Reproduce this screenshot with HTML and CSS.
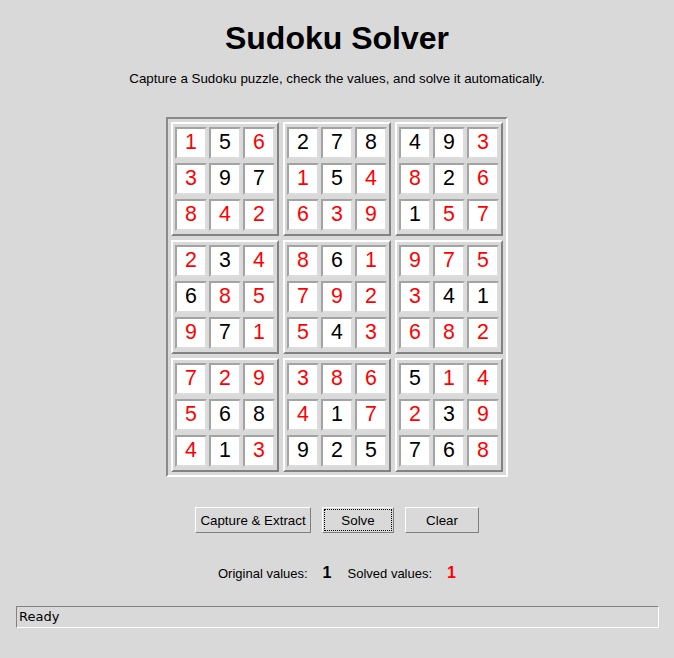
FILE: index.html
```html
<!DOCTYPE html>
<html>
<head>
<meta charset="utf-8">
<title>Sudoku Solver</title>
<link rel="stylesheet" href="styles.css">
</head>
<body>
<div class="app">
  <h1 class="title">Sudoku Solver</h1>
  <p class="subtitle">Capture a Sudoku puzzle, check the values, and solve it automatically.</p>
  <div class="board">
    <div class="block">
      <div class="cell solved">1</div><div class="cell">5</div><div class="cell solved">6</div>
      <div class="cell solved">3</div><div class="cell">9</div><div class="cell">7</div>
      <div class="cell solved">8</div><div class="cell solved">4</div><div class="cell solved">2</div>
    </div>
    <div class="block">
      <div class="cell">2</div><div class="cell">7</div><div class="cell">8</div>
      <div class="cell solved">1</div><div class="cell">5</div><div class="cell solved">4</div>
      <div class="cell solved">6</div><div class="cell solved">3</div><div class="cell solved">9</div>
    </div>
    <div class="block">
      <div class="cell">4</div><div class="cell">9</div><div class="cell solved">3</div>
      <div class="cell solved">8</div><div class="cell">2</div><div class="cell solved">6</div>
      <div class="cell">1</div><div class="cell solved">5</div><div class="cell solved">7</div>
    </div>
    <div class="block">
      <div class="cell solved">2</div><div class="cell">3</div><div class="cell solved">4</div>
      <div class="cell">6</div><div class="cell solved">8</div><div class="cell solved">5</div>
      <div class="cell solved">9</div><div class="cell">7</div><div class="cell solved">1</div>
    </div>
    <div class="block">
      <div class="cell solved">8</div><div class="cell">6</div><div class="cell solved">1</div>
      <div class="cell solved">7</div><div class="cell solved">9</div><div class="cell solved">2</div>
      <div class="cell solved">5</div><div class="cell">4</div><div class="cell solved">3</div>
    </div>
    <div class="block">
      <div class="cell solved">9</div><div class="cell solved">7</div><div class="cell solved">5</div>
      <div class="cell solved">3</div><div class="cell">4</div><div class="cell">1</div>
      <div class="cell solved">6</div><div class="cell solved">8</div><div class="cell solved">2</div>
    </div>
    <div class="block">
      <div class="cell solved">7</div><div class="cell solved">2</div><div class="cell solved">9</div>
      <div class="cell solved">5</div><div class="cell">6</div><div class="cell">8</div>
      <div class="cell solved">4</div><div class="cell">1</div><div class="cell solved">3</div>
    </div>
    <div class="block">
      <div class="cell solved">3</div><div class="cell solved">8</div><div class="cell solved">6</div>
      <div class="cell solved">4</div><div class="cell">1</div><div class="cell solved">7</div>
      <div class="cell">9</div><div class="cell">2</div><div class="cell">5</div>
    </div>
    <div class="block">
      <div class="cell">5</div><div class="cell solved">1</div><div class="cell solved">4</div>
      <div class="cell solved">2</div><div class="cell">3</div><div class="cell solved">9</div>
      <div class="cell">7</div><div class="cell">6</div><div class="cell solved">8</div>
    </div>
  </div>
  <div class="actions">
    <button class="btn btn-capture">Capture &amp; Extract</button>
    <button class="btn btn-solve">Solve</button>
    <button class="btn btn-clear">Clear</button>
  </div>
  <div class="stats">
    <span class="label">Original values:</span>
    <span class="value">1</span>
    <span class="label label-solved">Solved values:</span>
    <span class="value value-solved">1</span>
  </div>
  <div class="status">Ready</div>
</div>
</body>
</html>
```
FILE: styles.css
```css
html, body {
  margin: 0;
  padding: 0;
  background: #d9d9d9;
}

body {
  font-family: "Liberation Sans", Arial, sans-serif;
  color: #000;
}

.app {
  padding-top: 20px;
}

.title {
  margin: 0;
  font-size: 32px;
  font-weight: bold;
  line-height: 37px;
  text-align: center;
}

.subtitle {
  margin: 14px 0 0;
  font-size: 13.33px;
  line-height: 16px;
  text-align: center;
}

.board {
  margin: 30px auto 0;
  width: fit-content;
  display: grid;
  grid-template-columns: repeat(3, auto);
  padding: 1px;
  border: 2px solid;
  border-color: #8a8a8a #ffffff #ffffff #8a8a8a;
}

.block {
  margin: 2px;
  padding: 1px;
  display: grid;
  grid-template-columns: repeat(3, auto);
  border: 2px solid;
  border-color: #ffffff #828282 #828282 #ffffff;
}

.cell {
  width: 32px;
  height: 32px;
  margin: 2px 1px;
  box-sizing: border-box;
  background: #ffffff;
  border: 2px solid;
  border-color: #a3a3a3 #dcdcdc #dcdcdc #a3a3a3;
  display: flex;
  align-items: center;
  justify-content: center;
  font-size: 21.33px;
  line-height: 1;
  color: #000;
}

.cell.solved {
  color: #ff0000;
}

.actions {
  margin-top: 30px;
  display: flex;
  justify-content: center;
  gap: 11px;
}

.btn {
  height: 26px;
  box-sizing: border-box;
  padding: 0;
  background: #d9d9d9;
  border: 1px solid;
  border-color: #ffffff #7f7f7f #7f7f7f #ffffff;
  font-family: "Liberation Sans", Arial, sans-serif;
  font-size: 13.33px;
  color: #000;
}

.btn-capture { width: 116px; }
.btn-solve {
  width: 72px;
  outline: 1px dotted #000;
  outline-offset: -3px;
}
.btn-clear { width: 74px; }

.stats {
  margin-top: 31px;
  height: 21px;
  display: flex;
  justify-content: center;
  align-items: baseline;
  font-size: 13px;
}

.stats .value {
  font-size: 16px;
  font-weight: bold;
  margin: 0 16px 0 15px;
}

.stats .value-solved {
  color: #ff0000;
  margin-right: 0;
}

.status {
  margin: 21px 15px 0 16px;
  height: 22px;
  box-sizing: border-box;
  border: 1px solid;
  border-color: #828282 #ffffff #ffffff #828282;
  padding: 0 0 0 2px;
  font-family: "DejaVu Sans", sans-serif;
  font-size: 13px;
  line-height: 20px;
}
```
